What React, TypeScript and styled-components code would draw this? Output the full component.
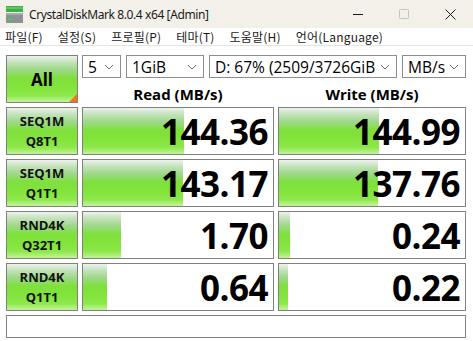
import styled, {createGlobalStyle} from "styled-components";

const GlobalStyle = createGlobalStyle`
  html, body {
    margin: 0;
    padding: 0;
    background: #ffffff;
  }
  body {
    font-family: "Noto Sans", "Noto Sans CJK KR", sans-serif;
    color: #000;
  }
`

type Result = {
    top: string;
    bottom: string;
    read: string;
    write: string;
    readBar: number;
    writeBar: number;
};

const results: Result[] = [
    {top: 'SEQ1M', bottom: 'Q8T1', read: '144.36', write: '144.99', readBar: 101, writeBar: 100},
    {top: 'SEQ1M', bottom: 'Q1T1', read: '143.17', write: '137.76', readBar: 100, writeBar: 99},
    {top: 'RND4K', bottom: 'Q32T1', read: '1.70', write: '0.24', readBar: 38, writeBar: 11},
    {top: 'RND4K', bottom: 'Q1T1', read: '0.64', write: '0.22', readBar: 24, writeBar: 9},
];

const menus = ['파일(F)', '설정(S)', '프로필(P)', '테마(T)', '도움말(H)', '언어(Language)'];

function DriveIcon() {
    return (
        <svg width="17" height="17" viewBox="0 0 17 17">
            <rect x="0" y="0" width="17" height="6" fill="#3fae4a"/>
            <rect x="0" y="1" width="17" height="2" fill="#5cc865"/>
            <rect x="0" y="7" width="17" height="10" fill="#8d9294"/>
            <rect x="0" y="7" width="17" height="2" fill="#a7abad"/>
            <rect x="2" y="12" width="4" height="2" fill="#3fd14a"/>
        </svg>
    )
}

function Chevron() {
    return (
        <svg width="10" height="6" viewBox="0 0 10 6">
            <path d="M1 1 L5 5 L9 1" fill="none" stroke="#6f6f6f" strokeWidth="1"/>
        </svg>
    )
}

function App() {
    return (
        <>
            <GlobalStyle/>
            <Window>
                <TitleBar>
                    <DriveIcon/>
                    <Title>CrystalDiskMark 8.0.4 x64 [Admin]</Title>
                    <Controls>
                        <ControlButton>
                            <svg width="10" height="10" viewBox="0 0 10 10">
                                <path d="M0 5.5 H10" stroke="#1a1a1a" strokeWidth="1"/>
                            </svg>
                        </ControlButton>
                        <ControlButton>
                            <svg width="10" height="10" viewBox="0 0 10 10">
                                <rect x="0.5" y="0.5" width="9" height="9" rx="1" fill="none" stroke="#c4c2bd"
                                      strokeWidth="1"/>
                            </svg>
                        </ControlButton>
                        <ControlButton>
                            <svg width="11" height="11" viewBox="0 0 11 11">
                                <path d="M0.5 0.5 L10.5 10.5 M10.5 0.5 L0.5 10.5" stroke="#1a1a1a" strokeWidth="1"/>
                            </svg>
                        </ControlButton>
                    </Controls>
                </TitleBar>
                <MenuBar>
                    {menus.map(m => <MenuItem key={m}>{m}</MenuItem>)}
                </MenuBar>
                <Board>
                    <AllButton>All</AllButton>
                    <Selects>
                        <Select $width={39}><span>5</span><Chevron/></Select>
                        <Select $width={78}><span>1GiB</span><Chevron/></Select>
                        <Select $width={188}><span>D: 67% (2509/3726GiB</span><Chevron/></Select>
                        <Select $width={64}><span>MB/s</span><Chevron/></Select>
                    </Selects>
                    <Header>Read (MB/s)</Header>
                    <Header>Write (MB/s)</Header>
                    {results.map((r, i) => (
                        <Row key={i}>
                            <TestButton>
                                <span>{r.top}</span>
                                <span>{r.bottom}</span>
                            </TestButton>
                            <ValueCell>
                                <Bar style={{width: r.readBar}}/>
                                <Value>{r.read}</Value>
                            </ValueCell>
                            <ValueCell>
                                <Bar style={{width: r.writeBar}}/>
                                <Value>{r.write}</Value>
                            </ValueCell>
                        </Row>
                    ))}
                    <Comment/>
                </Board>
            </Window>
        </>
    )
}

const Window = styled.div`
  width: 473px;
  height: 341px;
  background: #ffffff;
  overflow: hidden;
`

const TitleBar = styled.div`
  height: 28px;
  background: #f3f0e9;
  display: flex;
  align-items: center;
  padding-left: 6px;
`

const Title = styled.span`
  margin-left: 6px;
  font-family: "Noto Sans", sans-serif;
  font-size: 12px;
  color: #1a1a1a;
  letter-spacing: -0.4px;
`

const Controls = styled.div`
  margin-left: auto;
  display: flex;
  height: 100%;
`

const ControlButton = styled.div`
  width: 46px;
  height: 100%;
  display: flex;
  align-items: center;
  justify-content: center;
`

const MenuBar = styled.div`
  height: 17px;
  display: flex;
  align-items: center;
  gap: 15px;
  padding-left: 5px;
  border-bottom: 1px solid #e3e3e3;
`

const MenuItem = styled.span`
  font-family: "Noto Sans CJK KR", sans-serif;
  font-size: 12px;
  color: #1a1a1a;
  line-height: 17px;
  letter-spacing: 0.2px;
`

const greenGradient = `linear-gradient(to bottom,
  #eef2ee 0%,
  #c8e4c0 12%,
  #9ed88a 30%,
  #7fe03c 48%,
  #84e43c 70%,
  #8ee84c 86%,
  #c4f49c 100%)`;

const Board = styled.div`
  display: grid;
  grid-template-columns: 72px 192px 188px;
  grid-template-rows: 23px 21px repeat(4, 48px) 23px;
  column-gap: 4px;
  row-gap: 4px;
  padding: 9px 0 0 6px;
`

const AllButton = styled.div`
  grid-row: 1 / span 2;
  position: relative;
  border: 1px solid #808080;
  background: ${greenGradient};
  display: flex;
  align-items: center;
  justify-content: center;
  font-family: "Open Sans", sans-serif;
  font-weight: 700;
  font-size: 17px;

  &::after {
    content: "";
    position: absolute;
    right: 0;
    bottom: 0;
    border-style: solid;
    border-width: 0 0 8px 8px;
    border-color: transparent transparent #f07818 transparent;
  }
`

const Selects = styled.div`
  grid-column: 2 / span 2;
  display: flex;
  gap: 5px;
`

const Select = styled.div<{ $width: number }>`
  width: ${p => p.$width}px;
  box-sizing: border-box;
  border: 1px solid #8d8d8d;
  background: #ffffff;
  display: flex;
  align-items: center;
  justify-content: space-between;
  padding: 0 6px 0 5px;
  font-family: "Open Sans", sans-serif;
  font-size: 15.5px;
  white-space: nowrap;
  overflow: hidden;
`

const Header = styled.div`
  display: flex;
  align-items: flex-end;
  justify-content: center;
  font-family: "Open Sans", sans-serif;
  font-weight: 700;
  font-size: 15px;
  line-height: 18px;
`

const Row = styled.div`
  display: contents;
`

const TestButton = styled.div`
  border: 1px solid #808080;
  background: ${greenGradient};
  display: flex;
  flex-direction: column;
  align-items: center;
  justify-content: center;
  font-family: "Open Sans", sans-serif;
  font-weight: 700;
  font-size: 13px;
  line-height: 20px;
  color: #111;
`

const ValueCell = styled.div`
  position: relative;
  border: 1px solid #808080;
  background: #ffffff;
  display: flex;
  align-items: center;
  justify-content: flex-end;
  padding-right: 5px;
`

const Bar = styled.div`
  position: absolute;
  left: 0;
  top: 0;
  bottom: 0;
  background: ${greenGradient};
`

const Value = styled.span`
  position: relative;
  font-family: "Open Sans", sans-serif;
  font-weight: 700;
  font-size: 35px;
  letter-spacing: -0.5px;
  line-height: 1;
  color: #000;
`

const Comment = styled.div`
  grid-column: 1 / span 3;
  border: 1px solid #808080;
  background: #ffffff;
`

export default App;
